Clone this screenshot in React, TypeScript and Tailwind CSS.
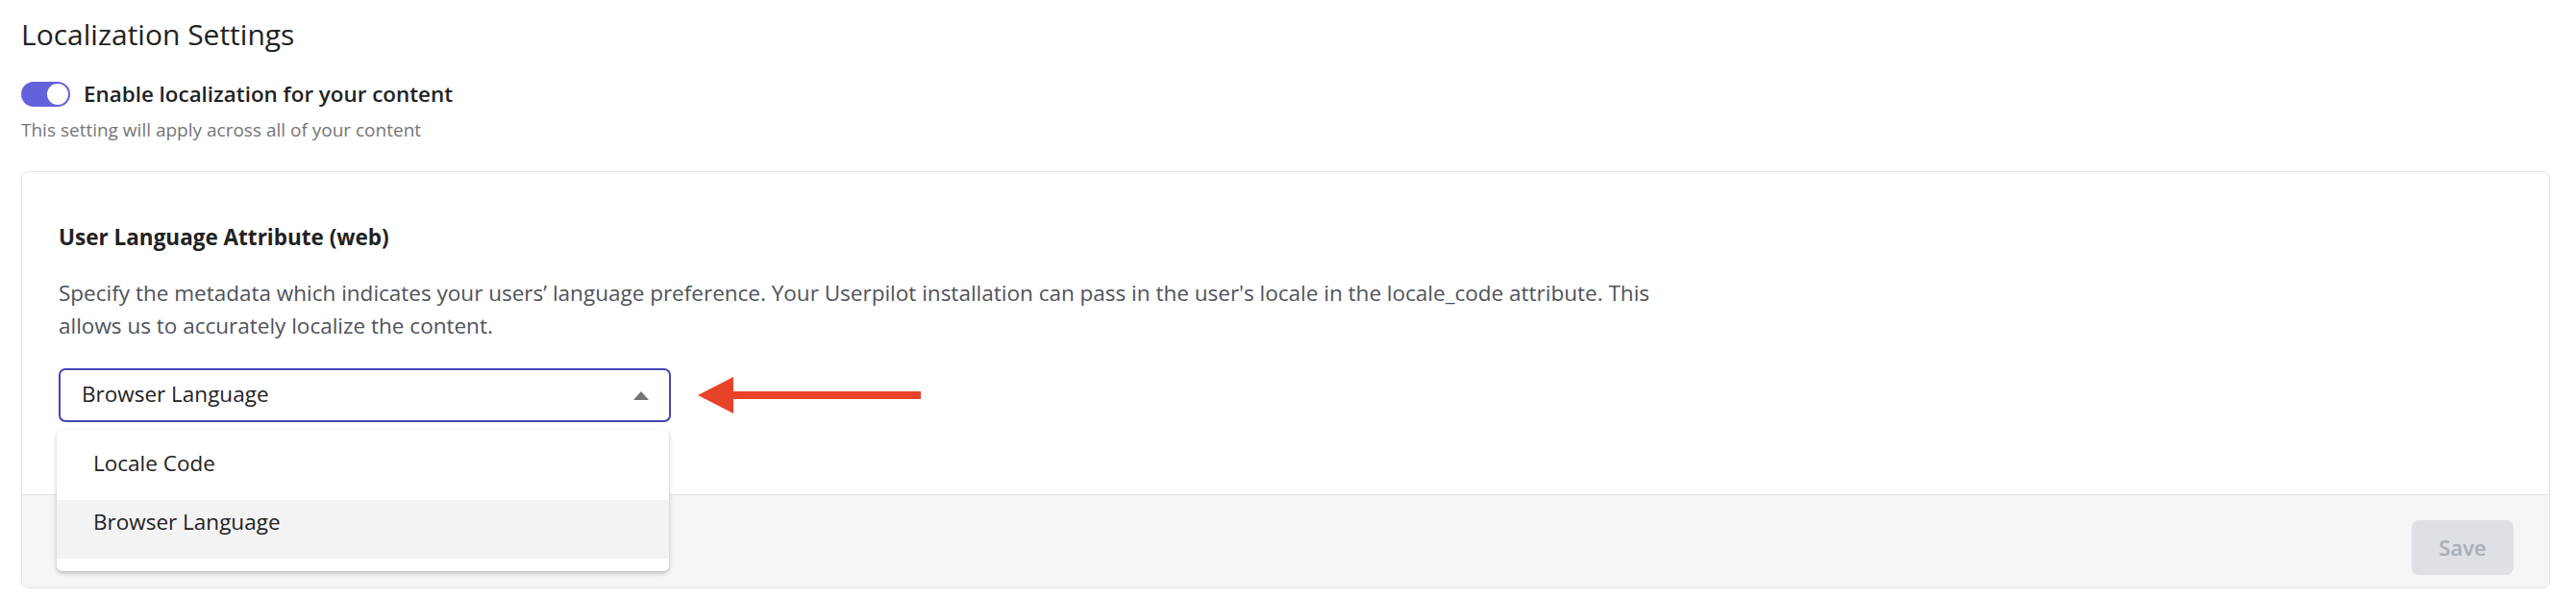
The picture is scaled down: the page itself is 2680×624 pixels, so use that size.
import React from "react";

const Toggle: React.FC = () => (
  <div className="w-[51px] h-[26px] rounded-full bg-[#6461dd] flex items-center justify-end p-[2px]">
    <div className="w-[22px] h-[22px] rounded-full bg-white" />
  </div>
);

const Caret: React.FC = () => (
  <svg width="16" height="9" viewBox="0 0 16 9">
    <path d="M8 0 L16 9 L0 9 Z" fill="#757575" />
  </svg>
);

const Arrow: React.FC = () => (
  <svg width="234" height="38" viewBox="0 0 234 38">
    <path d="M0 19 L37 0 L37 38 Z" fill="#e8432a" />
    <rect x="36" y="15" width="196" height="8" fill="#e8432a" />
  </svg>
);

export default function App() {
  return (
    <div
      className="w-[2680px] h-[624px] bg-white pl-[22px] pr-[27px] pt-[14px] text-[#222]"
      style={{ fontFamily: "'Open Sans', 'Noto Sans', sans-serif" }}
    >
      <h1 className="text-[30px] leading-[44px] font-normal">Localization Settings</h1>

      <div className="mt-[25px] flex items-center gap-[14px] h-[30px]">
        <Toggle />
        <span className="text-[22.4px] leading-[30px] font-semibold">Enable localization for your content</span>
      </div>
      <p className="mt-[9px] text-[19px] leading-[26px] text-[#757575]">
        This setting will apply across all of your content
      </p>

      <div className="mt-[30px] h-[434px] border border-[#e3e3e3] rounded-[8px] flex flex-col">
        <div className="flex-1 pl-[38px] pt-[52px] bg-white rounded-t-[8px]">
          <h2 className="text-[22.5px] leading-[32px] font-bold text-[#222]">User Language Attribute (web)</h2>
          <p className="mt-[25px] max-w-[1700px] text-[22.5px] leading-[34px] text-[#4f535a]">
            Specify the metadata which indicates your users’ language preference. Your Userpilot installation can
            pass in the user's locale in the locale_code attribute. This allows us to accurately localize the content.
          </p>

          <div className="mt-[27px] flex items-center gap-[28px]">
            <div className="relative">
              <div className="w-[637px] h-[56px] border-[2.5px] border-[#4346b4] rounded-[7px] flex items-center justify-between pl-[22px] pr-[21px]">
                <span className="text-[22.5px] text-[#222] -mt-[2px]">Browser Language</span>
                <Caret />
              </div>
              <div className="absolute left-[-2px] top-[64px] w-[637px] bg-white rounded-[6px] shadow-[0_2px_4px_rgba(0,0,0,0.25)] pt-[12px] pb-[13px] z-10">
                <div className="h-[61px] pt-[8px] pl-[38px] text-[22.5px] leading-[30px] text-[#222]">Locale Code</div>
                <div className="h-[61px] pt-[8px] pl-[38px] text-[22.5px] leading-[30px] text-[#222] bg-[#f3f3f3]">
                  Browser Language
                </div>
              </div>
            </div>
            <Arrow />
          </div>
        </div>
        <div className="h-[97px] bg-[#f5f5f5] border-t border-[#e3e3e3] rounded-b-[8px] flex justify-end items-start pt-[26px] pr-[37px]">
          <button className="w-[106px] h-[57px] rounded-[8px] bg-[#dde0e4] text-[#a6adb6] text-[22px] font-semibold">
            Save
          </button>
        </div>
      </div>
    </div>
  );
}
